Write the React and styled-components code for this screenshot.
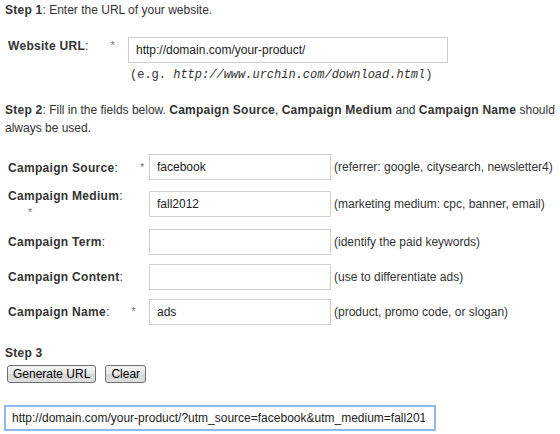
import React from "react";
import styled, { createGlobalStyle } from "styled-components";

const Global = createGlobalStyle`
  html, body { margin: 0; padding: 0; background: #fff; }
  body { font-family: "Liberation Sans", Arial, sans-serif; font-size: 12px; color: #333; }
`;

const Page = styled.div`
  width: 560px;
  padding: 0 5px;
  box-sizing: border-box;
`;

const StepTitle = styled.div`
  line-height: ${(p) => p.$lh || 16}px;
  margin-top: ${(p) => p.$mt || 0}px;
  b { font-weight: bold; letter-spacing: 0.25px; }
`;

const UrlGrid = styled.div`
  display: grid;
  grid-template-columns: 120px auto;
  margin: 15px 0 0 3px;
  align-items: start;
`;

const FieldsGrid = styled.div`
  display: grid;
  grid-template-columns: 141px 182px auto;
  row-gap: 1px;
  margin: 13px 0 0 3px;
  align-items: center;
`;

const Label = styled.div`
  padding: 4px 0;
  line-height: ${(p) => p.$lh || 16}px;
  white-space: nowrap;
  b { font-weight: bold; letter-spacing: 0.3px; }
`;

const Star = styled.span`
  display: ${(p) => (p.$below ? "block" : "inline")};
  margin-left: ${(p) => (p.$below ? 20 : 22)}px;
  color: #777;
  font-size: 11px;
  ${(p) => (p.$below ? "line-height: 15px;" : "vertical-align: 1px;")}
`;

const Cell = styled.div`
  padding: 4px 0;
  display: flex;
  flex-direction: column;
`;

const TextInput = styled.input`
  box-sizing: border-box;
  width: ${(p) => p.$w}px;
  height: 26px;
  margin: 0;
  border: 1px solid #cfcfcf;
  padding: 0 7px;
  font-family: "Liberation Sans", Arial, sans-serif;
  font-size: 12px;
  color: #222;
  background: #fff;
  outline: none;
`;

const ExampleHint = styled.div`
  margin: 4px 0 0 2px;
  line-height: 16px;
  font-family: "Liberation Mono", "Courier New", monospace;
  font-size: 12px;
  color: #333;
  i { font-style: italic; }
`;

const Hint = styled.div`
  margin-left: 3px;
  line-height: 16px;
  white-space: nowrap;
`;

const ButtonBar = styled.div`
  display: flex;
  gap: 9px;
  margin: 4px 0 0 2px;
`;

const Button = styled.button`
  box-sizing: border-box;
  height: 18px;
  margin: 0;
  padding: 0 5px;
  border: 1px solid #707070;
  border-radius: 3px;
  background: linear-gradient(#f4f4f4, #e6e6e6 50%, #d8d8d8 51%, #dedede);
  font-family: "Liberation Sans", Arial, sans-serif;
  font-size: 12px;
  line-height: 16px;
  color: #000;
  cursor: pointer;
`;

const ResultInput = styled.input`
  display: block;
  box-sizing: border-box;
  width: 432px;
  height: 26px;
  margin: 22px 0 0 -1px;
  border: 2px solid #93b8f0;
  padding: 0 9px 0 6px;
  font-family: "Liberation Sans", Arial, sans-serif;
  font-size: 12px;
  color: #222;
  background: #fff;
  outline: none;
`;

const fields = [
  { label: "Campaign Source", req: true, value: "facebook", hint: "(referrer: google, citysearch, newsletter4)" },
  { label: "Campaign Medium", req: true, below: true, value: "fall2012", hint: "(marketing medium: cpc, banner, email)" },
  { label: "Campaign Term", value: "", hint: "(identify the paid keywords)" },
  { label: "Campaign Content", value: "", hint: "(use to differentiate ads)" },
  { label: "Campaign Name", req: true, value: "ads", hint: "(product, promo code, or slogan)" },
];

export default function App() {
  return (
    <Page>
      <Global />
      <StepTitle $mt={2}>
        <b>Step 1</b>: Enter the URL of your website.
      </StepTitle>
      <UrlGrid>
        <Label>
          <b>Website URL</b>:<Star>*</Star>
        </Label>
        <Cell>
          <TextInput $w={320} defaultValue="http://domain.com/your-product/" />
          <ExampleHint>
            (e.g. <i>http://www.urchin.com/download.html</i>)
          </ExampleHint>
        </Cell>
      </UrlGrid>
      <StepTitle $mt={14} $lh={18}>
        <b>Step 2</b>: Fill in the fields below. <b>Campaign Source</b>, <b>Campaign Medium</b> and{" "}
        <b>Campaign Name</b> should always be used.
      </StepTitle>
      <FieldsGrid>
        {fields.map((f) => (
          <React.Fragment key={f.label}>
            <Label $lh={f.below ? 15.5 : 16}>
              <b>{f.label}</b>:{f.req && <Star $below={f.below}>*</Star>}
            </Label>
            <Cell>
              <TextInput $w={182} defaultValue={f.value} />
            </Cell>
            <Hint>{f.hint}</Hint>
          </React.Fragment>
        ))}
      </FieldsGrid>
      <StepTitle $mt={16}>
        <b>Step 3</b>
      </StepTitle>
      <ButtonBar>
        <Button type="button">Generate URL</Button>
        <Button type="button">Clear</Button>
      </ButtonBar>
      <ResultInput
        readOnly
        value="http://domain.com/your-product/?utm_source=facebook&utm_medium=fall2012&utm_campaign=ads"
      />
    </Page>
  );
}
